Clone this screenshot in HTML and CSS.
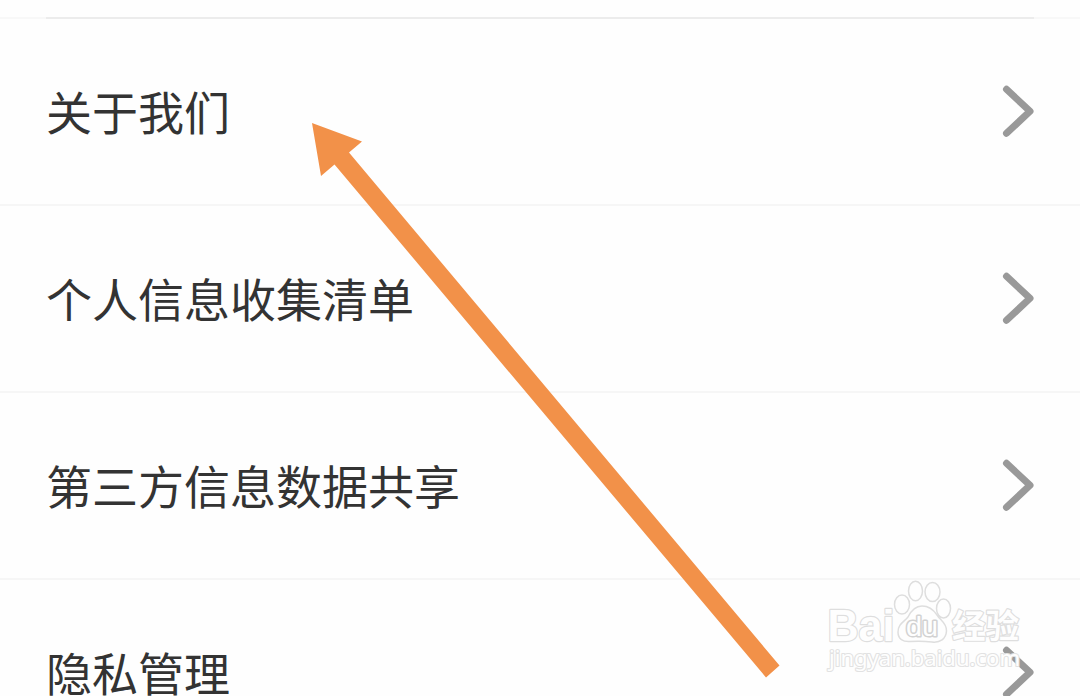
FILE: index.html
```html
<!DOCTYPE html>
<html lang="zh-CN">
<head>
<meta charset="utf-8">
<title>设置</title>
<link rel="stylesheet" href="styles.css">
</head>
<body>
<main class="screen">
  <div class="top-divider"><div class="top-divider-inner"></div></div>
  <ul class="menu">
    <li class="row"><span class="label">关于我们</span><svg class="chevron" viewBox="0 0 34 54"><path d="M5.500 5.300 29 27.300 5.500 49.300"/></svg></li>
    <li class="row"><span class="label">个人信息收集清单</span><svg class="chevron" viewBox="0 0 34 54"><path d="M5.500 5.300 29 27.300 5.500 49.300"/></svg></li>
    <li class="row"><span class="label">第三方信息数据共享</span><svg class="chevron" viewBox="0 0 34 54"><path d="M5.500 5.300 29 27.300 5.500 49.300"/></svg></li>
    <li class="row"><span class="label">隐私管理</span><svg class="chevron" viewBox="0 0 34 54"><path d="M5.500 5.300 29 27.300 5.500 49.300"/></svg></li>
  </ul>
  <svg class="arrow" viewBox="0 0 1080 696"><path d="M312 123 362 141.500 349 152.500 779.500 665.500 766 677.500 334.500 164.500 321 176Z"/></svg>
  <svg class="watermark" viewBox="0 0 270 126">
    <g class="mark">
      <text class="brand" x="17.500" y="70.500" textLength="67" lengthAdjust="spacingAndGlyphs">Bai</text>
      <ellipse cx="92" cy="34.500" rx="7.500" ry="9.500"/>
      <ellipse cx="105.500" cy="21" rx="7" ry="9.700"/>
      <ellipse cx="122.500" cy="22" rx="7.500" ry="9.500"/>
      <ellipse cx="133.500" cy="38.500" rx="7" ry="9.500"/>
      <path d="M112 36C105 36 101 41 98 47C94 52 88 54 88 62C88 69 93 72 100 71.500C108 71 114 71 122 72C130 73 136 69 136.500 61C137 53 130 50 127 45C123 39 119 36 112 36Z"/>
      <text class="du" x="96" y="65.500" textLength="32" lengthAdjust="spacingAndGlyphs">du</text>
      <text class="cjk" x="142" y="67.500" textLength="67" lengthAdjust="spacingAndGlyphs">经验</text>
      <text class="url" x="19" y="96" textLength="191" lengthAdjust="spacingAndGlyphs">jingyan.baidu.com</text>
    </g>
  </svg>
</main>
</body>
</html>
```
FILE: styles.css
```css
* { box-sizing: border-box; }

body {
  margin: 0;
  background: #fefefe;
  color: #333;
  font-family: "Noto Sans CJK SC", sans-serif;
}

.screen {
  position: relative;
  height: 696px;
  padding-top: 17px;
  overflow: hidden;
}

.top-divider {
  padding: 0 46px;
  background: #f8f8f8;
}

.top-divider-inner {
  height: 2px;
  background: #ececec;
}

.menu {
  margin: 0;
  padding: 0;
  list-style: none;
}

.row {
  display: flex;
  align-items: center;
  justify-content: space-between;
  height: 187px;
  padding: 0 45px 2px 46px;
  border-bottom: 2px solid #f6f6f6;
}

.label {
  padding-bottom: 2px;
  font-size: 46px;
  line-height: 68px;
}

.chevron {
  width: 34px;
  height: 54px;
  flex: none;
}

.chevron path {
  fill: none;
  stroke: #999;
  stroke-width: 7;
  stroke-linecap: round;
  stroke-linejoin: round;
}

.arrow {
  position: absolute;
  top: 0;
  left: 0;
  width: 1080px;
  height: 696px;
  fill: #f29149;
}

.watermark {
  position: absolute;
  top: 570px;
  left: 810px;
  width: 270px;
  height: 126px;
}

.mark {
  fill: #fefefe;
  stroke: #dedede;
  stroke-width: 1.5;
}

.mark text {
  paint-order: stroke;
  stroke-width: 2.4;
  stroke-linejoin: round;
}

.mark .brand {
  font: bold 45px "Liberation Sans", sans-serif;
}

.mark .du {
  font: 27px "Liberation Sans", sans-serif;
  stroke: #d2d2d2;
  stroke-width: 3;
}

.mark .cjk {
  font: bold 33px "Noto Sans CJK SC", sans-serif;
}

.mark .url {
  font: 22px "Noto Sans", sans-serif;
  stroke: #e2e2e2;
  stroke-width: 2.2;
}
```
